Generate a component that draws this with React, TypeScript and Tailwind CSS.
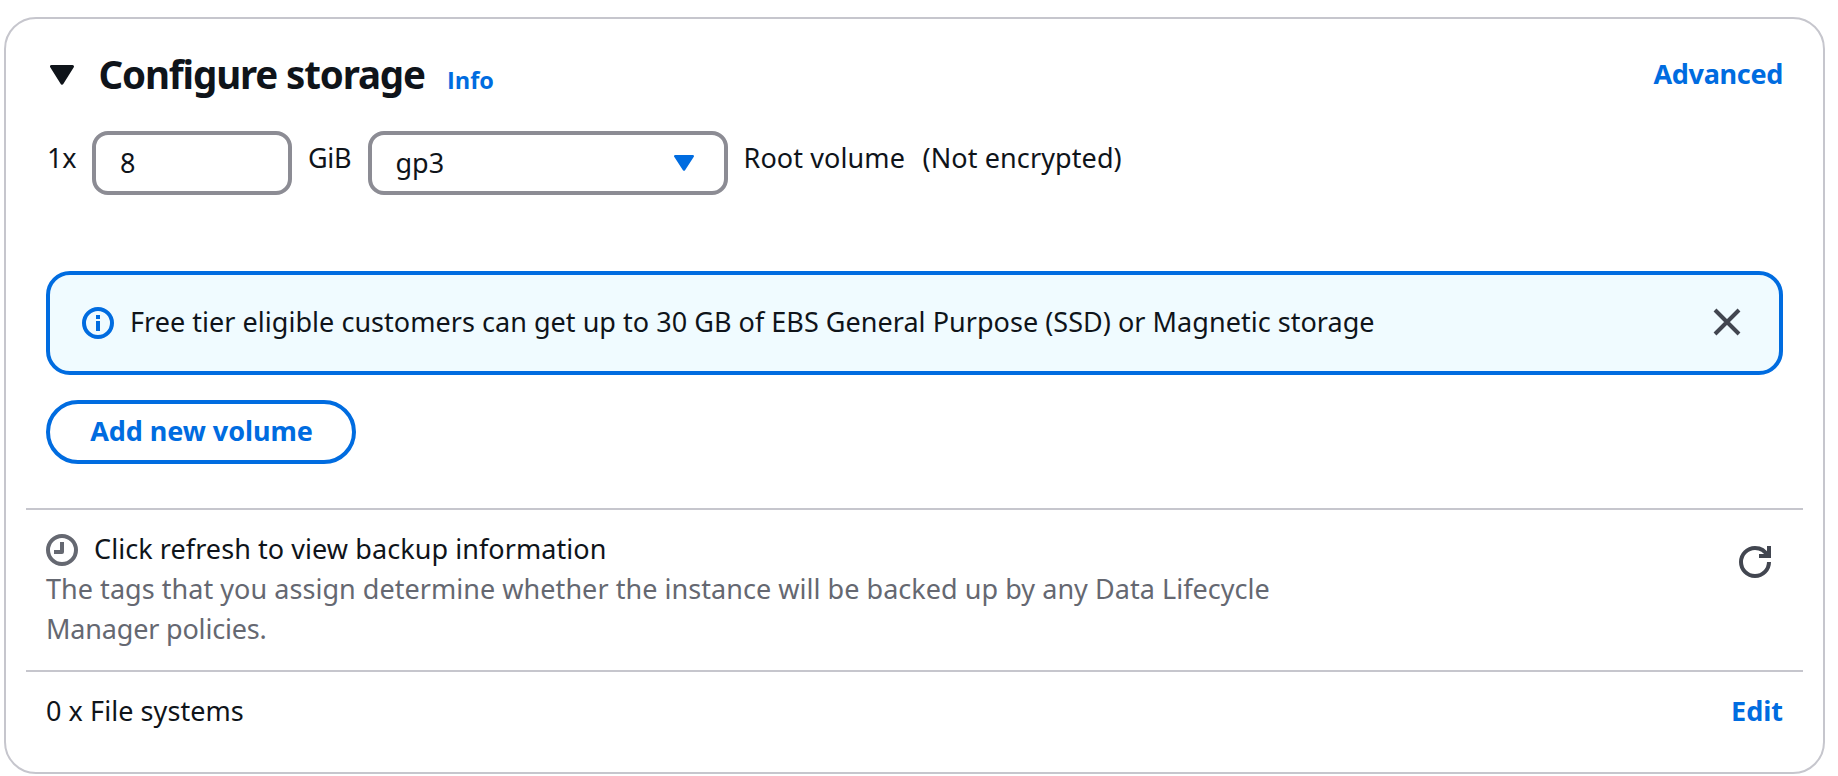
import type { ReactNode } from 'react'

function Caret({ className }: { className: string }) {
  return (
    <svg viewBox="0 0 24 20" preserveAspectRatio="none" className={className} fill="currentColor" stroke="currentColor">
      <path d="M1.5 1.5h21L12 18.2z" strokeWidth="3" strokeLinejoin="round" />
    </svg>
  )
}

function InfoIcon() {
  return (
    <svg viewBox="0 0 16 16" className="mt-[5px] size-8 shrink-0 text-[#006ce0]" fill="none" stroke="currentColor" strokeWidth="2">
      <circle cx="8" cy="8" r="7" />
      <path d="M8 12V7M8 6V4" />
    </svg>
  )
}

function CloseIcon() {
  return (
    <svg viewBox="0 0 16 16" className="size-8" fill="none" stroke="currentColor" strokeWidth="2">
      <path d="m2 2 12 12M14 2 2 14" />
    </svg>
  )
}

function ClockIcon() {
  return (
    <svg viewBox="0 0 16 16" className="mt-[5px] size-8 shrink-0 text-[#656871]" fill="none" stroke="currentColor" strokeWidth="2">
      <circle cx="8" cy="8" r="7" />
      <path d="M8 4v5H4" strokeLinejoin="round" />
    </svg>
  )
}

function RefreshIcon() {
  return (
    <svg viewBox="0 0 16 16" className="size-8" fill="none" stroke="currentColor" strokeWidth="2">
      <path d="M15 8c0 3.87-3.13 7-7 7s-7-3.13-7-7 3.13-7 7-7c2.79 0 5.2 1.63 6.33 4" />
      <path d="M10 5h5V0" />
    </svg>
  )
}

function Link({ children, className = '' }: { children: ReactNode; className?: string }) {
  return (
    <a href="#" className={`font-bold text-[#006ce0] ${className}`}>
      {children}
    </a>
  )
}

export default function App() {
  return (
    <div className="h-[776px] w-[1838px] overflow-hidden bg-white pt-[17px] pl-1 font-['Noto_Sans','Open_Sans',sans-serif] text-[27px] leading-10 whitespace-nowrap text-[#0f141a]">
      <section className="flex h-[757px] w-[1821px] flex-col rounded-[32px] border-2 border-[#c6c6cd] px-5 pt-[31px]">
        <header className="flex h-12 items-start justify-between px-5">
          <div className="flex items-baseline">
            <Caret className="mr-6 ml-1 h-5 w-6 -translate-y-1" />
            <h2 className="w-[327px] pl-[0.5px] text-[38.5px] leading-[48px] font-bold tracking-[-1.15px]">Configure storage</h2>
            <Link className="ml-[22px] font-['Open_Sans',sans-serif] text-[23.5px]">Info</Link>
          </div>
          <Link className="mt-1 tracking-[-0.3px]">Advanced</Link>
        </header>

        <div className="mt-[33px] flex items-start px-5">
          <span className="mt-[7px] w-[46px] pl-px tracking-[-0.3px]">1x</span>
          <div className="flex h-16 w-[200px] rounded-2xl border-4 border-[#8c8c94] pt-2 pl-6">8</div>
          <span className="mt-[7px] w-[76px] pl-4 tracking-[-0.3px]">GiB</span>
          <div className="flex h-16 w-[360px] items-start justify-between rounded-2xl border-4 border-[#8c8c94] pt-2 pr-[30px] pl-[23.5px]">
            gp3
            <Caret className="mt-3 h-4 w-5 text-[#006ce0]" />
          </div>
          <span className="mt-[7px] ml-[15.5px] tracking-[0.1px]">Root volume</span>
          <span className="mt-[7px] ml-[17.5px] tracking-[0.1px]">(Not encrypted)</span>
        </div>

        <div className="mx-5 mt-[76px] flex h-[104px] items-start rounded-3xl border-4 border-[#006ce0] bg-[#f0fbff] pt-[27px] pr-9 pl-8">
          <InfoIcon />
          <p className="ml-4 grow tracking-[0.033px]">
            Free tier eligible customers can get up to 30 GB of EBS General Purpose (SSD) or Magnetic storage
          </p>
          <button className="mt-1 h-8 text-[#424650]" aria-label="Dismiss">
            <CloseIcon />
          </button>
        </div>

        <button className="mx-5 mt-[25px] flex h-16 w-[310px] justify-center rounded-full border-4 border-[#006ce0] pt-[7px] pl-px font-bold tracking-[-0.05px] text-[#006ce0]">
          Add new volume
        </button>

        <div className="mt-11 flex items-start justify-between border-t-2 border-[#c6c6cd] px-5 pt-[19px]">
          <div>
            <div className="flex">
              <ClockIcon />
              <span className="ml-4 tracking-[0.07px]">Click refresh to view backup information</span>
            </div>
            <p className="w-[1280px] tracking-[0.04px] whitespace-normal text-[#656871]">
              The tags that you assign determine whether the instance will be backed up by any Data Lifecycle{' '}
              <span className="tracking-[-0.18px]">Manager policies.</span>
            </p>
          </div>
          <button className="mt-[17px] mr-3 text-[#424650]" aria-label="Refresh">
            <RefreshIcon />
          </button>
        </div>

        <div className="mt-[21px] flex justify-between border-t-2 border-[#c6c6cd] px-5 pt-[19px]">
          <span className="tracking-[0.07px]">0 x File systems</span>
          <Link>Edit</Link>
        </div>
      </section>
    </div>
  )
}
